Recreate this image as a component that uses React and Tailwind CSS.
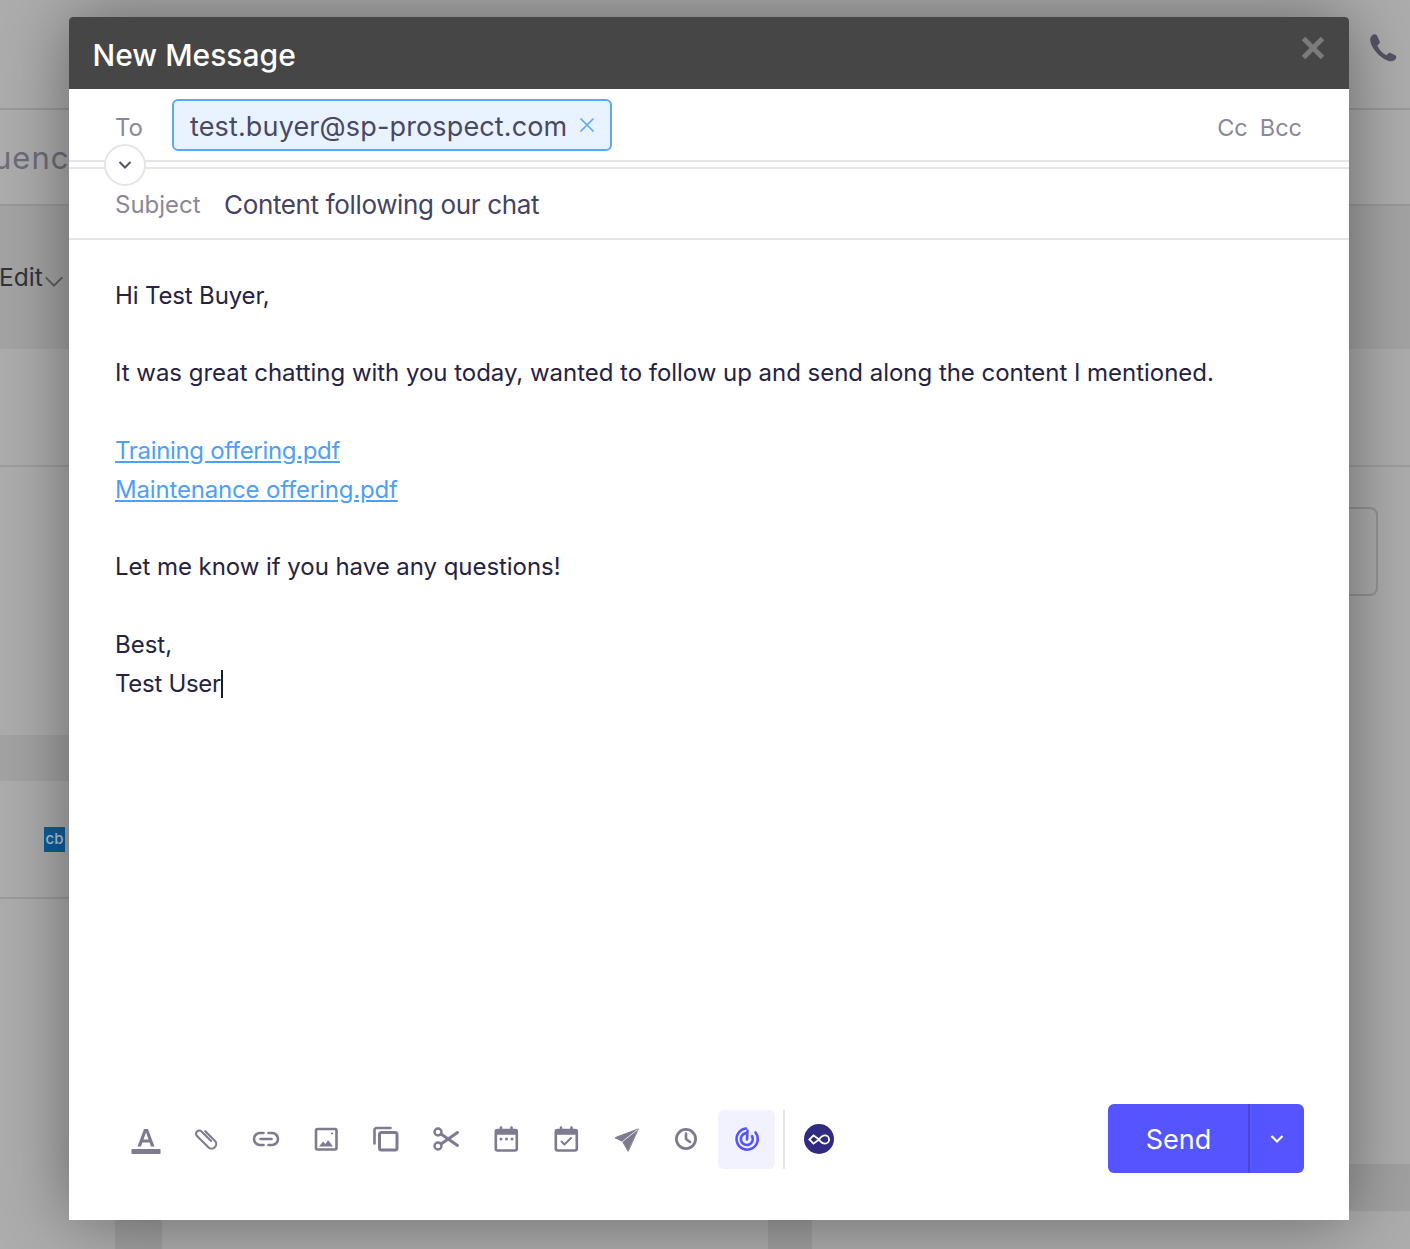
import React from "react";

const Ic = ({ children }) => (
  <svg viewBox="0 0 30 30" fill="none" stroke="#7e7b90" strokeWidth="2.6" strokeLinecap="round" strokeLinejoin="round" className="w-[30px] h-[30px]">
    {children}
  </svg>
);

const tools = [
  <Ic key="a">
    <path d="M6.5 22.5 L13 5 H17 L23.5 22.5 H20 L18.6 18.5 H11.4 L10 22.5 Z M12.5 15.5 H17.5 L15 8.5 Z" fill="#7e7b90" fillRule="evenodd" stroke="none" />
    <rect x="0.5" y="25" width="29" height="5" fill="#7e7b90" stroke="none" />
  </Ic>,
  <Ic key="clip">
    <g transform="rotate(-45 15 15)" strokeWidth="2.1">
      <path d="M20 9 V22.5 a4.6 4.6 0 0 1 -9.2 0 V6.5 a3.2 3.2 0 0 1 6.4 0 V20" />
    </g>
  </Ic>,
  <Ic key="link">
    <path d="M12.5 9 H9 a6 6 0 0 0 0 12 H12.5 M17.5 9 H21 a6 6 0 0 1 0 12 H17.5 M9.5 15 H20.5" />
  </Ic>,
  <Ic key="img">
    <rect x="5" y="5" width="20.5" height="20.5" rx="1.5" />
    <path d="M8 22.5 l4 -5 2.5 2.5 2.5 -4 5 6.5 z" fill="#7e7b90" stroke="none" />
    <circle cx="21" cy="9.5" r="1.1" fill="#7e7b90" stroke="none" />
  </Ic>,
  <Ic key="copy">
    <path d="M3.5 19.5 V6 a2 2 0 0 1 2 -2 H19.5" />
    <rect x="8.5" y="8.5" width="17.5" height="17.5" rx="2" strokeWidth="3" />
  </Ic>,
  <Ic key="cut">
    <circle cx="7" cy="8" r="3.5" strokeWidth="2.4" />
    <circle cx="7" cy="22" r="3.5" strokeWidth="2.4" />
    <path d="M10 10 L26.5 21.5 M10 20 L26.5 8.5" strokeWidth="3" />
  </Ic>,
  <Ic key="cal">
    <rect x="4.8" y="6" width="21" height="20.5" rx="2" />
    <path d="M4.8 6 h21 v4 h-21 z" fill="#7e7b90" strokeWidth="1.5" />
    <path d="M10 3.5 v3 M20.5 3.5 v3" />
    <circle cx="10" cy="15" r="1.5" fill="#7e7b90" stroke="none" />
    <circle cx="15.5" cy="15" r="1.5" fill="#7e7b90" stroke="none" />
    <circle cx="21" cy="15" r="1.5" fill="#7e7b90" stroke="none" />
  </Ic>,
  <Ic key="calc">
    <rect x="4.8" y="6" width="21" height="20.5" rx="2" />
    <path d="M4.8 6 h21 v4 h-21 z" fill="#7e7b90" strokeWidth="1.5" />
    <path d="M10 3.5 v3 M20.5 3.5 v3" />
    <path d="M10.5 17.5 l3 3 l6.5 -6.5" strokeWidth="2" />
  </Ic>,
  <Ic key="send">
    <path d="M27 5 L4 13.7 L11.5 17.5 L17 27 Z" fill="#7e7b90" strokeWidth="1" />
    <path d="M26 6 L11.5 17.5" stroke="#ffffff" strokeWidth="0.8" />
  </Ic>,
  <Ic key="clock">
    <circle cx="15" cy="15" r="9.6" strokeWidth="2.8" />
    <path d="M15 9.5 V15 l4 3" />
  </Ic>,
];

export default function App() {
  return (
    <div className="relative w-[1410px] h-[1249px] overflow-hidden bg-[#adadad] font-['Inter','Liberation_Sans',sans-serif]">
      {/* dimmed page behind the dialog */}
      <div className="flex flex-col h-full">
        <div className="h-[110px] shrink-0 border-b-2 border-[#9a9a9a] flex justify-end pt-[31px] pr-[10px]">
          <svg viewBox="0 0 24 24" className="w-[35px] h-[35px]" fill="#565465">
            <path d="M6.6 2.2c-.7 0-1.6.5-2.4 1.6C3.4 5 3.4 6.6 4 8.4c1.6 4.6 5.8 9.2 10.4 11.4 2 .9 3.8 1.2 5.2.6 1.1-.5 1.8-1.4 1.8-2.4 0-.6-.3-1-.8-1.3l-3-1.6c-.6-.3-1.2-.2-1.7.3l-1.2 1.3c-2.8-1.4-5-3.8-6.3-6.7l1.3-1.2c.5-.4.6-1 .4-1.6L8.4 3.4c-.3-.8-1-1.2-1.8-1.2z" />
          </svg>
        </div>
        <div className="h-[96px] shrink-0 border-b-2 border-[#9a9a9a] flex items-center pt-[2px] text-[#6e6c78]">
          <span className="text-[31px] tracking-[1px] -ml-[7px]">uence</span>
        </div>
        <div className="h-[143px] shrink-0 bg-[#a4a4a4] flex items-center text-[#33323d]">
          <span className="text-[24.5px] -ml-[1px]">Edit</span>
          <svg viewBox="0 0 24 24" className="w-[22px] h-[22px] mt-[6px]" fill="none" stroke="#5a5a60" strokeWidth="2">
            <path d="M3 8 l9 9 l9 -9" />
          </svg>
        </div>
        <div className="h-[118px] shrink-0 border-b-2 border-[#9e9e9e]" />
        <div className="flex-1 flex min-h-0">
          <div className="w-[768px] flex flex-col">
            <div className="h-[268px] shrink-0" />
            <div className="h-[46px] shrink-0 bg-[#a3a3a3]" />
            <div className="h-[118px] shrink-0 border-b-2 border-[#9c9c9c] flex items-center pl-[44px]">
              <div className="w-[21px] h-[25px] bg-[#0b5f9e] text-[#b5c8d6] text-[15px] font-medium flex items-center justify-center">cb</div>
            </div>
            <div className="flex-1 flex">
              <div className="ml-[115px] w-[47px] bg-[#a0a0a0]" />
            </div>
          </div>
          <div className="w-[44px] bg-[#a0a0a0]" />
          <div className="flex-1 flex flex-col">
            <div className="h-[697px] shrink-0 flex justify-end items-start pt-[40px] pr-[32px]">
              <div className="w-[60px] h-[89px] rounded-[8px] border-2 border-[#949494]" />
            </div>
            <div className="h-[47px] shrink-0 bg-[#a1a1a1]" />
          </div>
        </div>
      </div>

      {/* dialog */}
      <div className="absolute left-[69px] top-[17px] w-[1280px] h-[1203px] flex flex-col bg-white rounded-t-[4px] shadow-[0_0_70px_rgba(0,0,0,0.42)]">
        <div className="h-[72px] shrink-0 bg-[#464646] rounded-t-[4px] flex items-center justify-between pl-[23.5px] pr-[24px]">
          <span className="text-[30px] font-medium text-white mt-[4px]">New Message</span>
          <svg viewBox="0 0 24 24" className="w-[24px] h-[24px] -mt-[10px]" fill="none" stroke="#7b7b7b" strokeWidth="5">
            <path d="M2.5 2.5 L21.5 21.5 M21.5 2.5 L2.5 21.5" />
          </svg>
        </div>

        <div className="relative h-[73px] shrink-0 border-b-2 border-[#e4e4e9] flex items-start pt-[10px] pl-[46px] pr-[47px]">
          <span className="w-[57px] mt-[13px] text-[24px] leading-[32px] text-[#8b889b]">To</span>
          <div className="h-[52px] w-[440px] rounded-[6px] border-2 border-[#5aa9f8] bg-[#e9f3ff] flex items-center pl-[16px] gap-[12px]">
            <span className="text-[27px] text-[#4a4865] leading-none tracking-[0.14px] mt-[3px]">test.buyer@sp-prospect.com</span>
            <svg viewBox="0 0 16 16" className="w-[16px] h-[16px]" fill="none" stroke="#5aa9f8" strokeWidth="1.7">
              <path d="M1.5 1.5 L14.5 14.5 M14.5 1.5 L1.5 14.5" />
            </svg>
          </div>
          <div className="ml-auto mt-[13px] flex gap-[12px] text-[23.5px] leading-[32px] text-[#8b889b]">
            <span>Cc</span>
            <span>Bcc</span>
          </div>
          <div className="absolute left-[35px] top-[55px] w-[42px] h-[42px] rounded-full border-2 border-[#e4e4e9] bg-white flex items-center justify-center">
            <svg viewBox="0 0 16 16" className="w-[16px] h-[16px]" fill="none" stroke="#55536b" strokeWidth="2">
              <path d="M2.5 5 L8 10.5 L13.5 5" />
            </svg>
          </div>
        </div>

        <div className="mt-[5px] h-[73px] shrink-0 border-y-2 border-[#e4e4e9] flex items-center pl-[46px] pt-[2px]">
          <span className="w-[109px] text-[24px] text-[#8b889b]">Subject</span>
          <span className="text-[26px] tracking-[-0.35px] text-[#45435f]">Content following our chat</span>
        </div>

        <div className="flex-1 pl-[46px] pt-[36.5px] text-[24px] leading-[38.85px] text-[#25233f]">
          <p className="tracking-[-0.15px]">Hi Test Buyer,</p>
          <p className="mt-[38.85px] tracking-[-0.03px]">It was great chatting with you today, wanted to follow up and send along the content I mentioned.</p>
          <p className="mt-[38.85px] text-[#4f9ff5] underline tracking-[-0.33px]">Training offering.pdf</p>
          <p className="text-[#4f9ff5] underline tracking-[-0.17px]">Maintenance offering.pdf</p>
          <p className="mt-[38.85px] tracking-[-0.05px]">Let me know if you have any questions!</p>
          <p className="mt-[38.85px]">Best,</p>
          <p className="flex items-center tracking-[-0.3px]">Test User<span className="inline-block w-[2px] h-[28px] bg-[#1c1b2e]" /></p>
        </div>

        <div className="shrink-0 h-[116px] flex items-start pl-[61.5px] pr-[45px]">
          <div className="flex items-center h-[70px]">
            <div className="flex items-center gap-[30.1px]">
              {tools.map((t, i) => (
                <div key={i} className="w-[30px] h-[30px] flex items-center justify-center">{t}</div>
              ))}
            </div>
            <div className="ml-[17px] w-[57px] h-[59px] rounded-[6px] bg-[#f2f1fe] flex items-center justify-center">
              <svg viewBox="0 0 30 30" className="w-[30px] h-[30px]" fill="none" stroke="#5555ff" strokeWidth="2.6" strokeLinecap="round">
                <path d="M14 4.5 A10.6 10.6 0 1 0 23.5 8.5" />
                <path d="M14 9.1 A6 6 0 1 0 20 12" />
                <path d="M15.5 6.5 L15 15.5" />
              </svg>
            </div>
            <div className="ml-[8px] w-[2px] h-[59px] bg-[#e6e6e9]" />
            <div className="ml-[19px] w-[30px] h-[30px] rounded-full bg-[#2e2b80] flex items-center justify-center">
              <svg viewBox="0 0 24 12" className="w-[22px] h-[11px]" fill="none" stroke="#ffffff" strokeWidth="2">
                <path d="M6 1.5 L1.5 6 L6 10.5 L12 6 Q15 1.5 18.5 1.5 a4.5 4.5 0 0 1 0 9 Q15 10.5 12 6 L6 1.5 Z" />
              </svg>
            </div>
          </div>
          <div className="ml-auto h-[69px] w-[196px] rounded-[6px] bg-[#5555ff] flex text-white">
            <div className="w-[142px] pl-[1px] pt-[3px] flex items-center justify-center border-r-2 border-[#4a46d0] text-[27px]">Send</div>
            <div className="flex-1 flex items-center justify-center">
              <svg viewBox="0 0 16 16" className="w-[16px] h-[16px]" fill="none" stroke="#ffffff" strokeWidth="2.2">
                <path d="M2.5 5 L8 10.5 L13.5 5" />
              </svg>
            </div>
          </div>
        </div>
      </div>
    </div>
  );
}
